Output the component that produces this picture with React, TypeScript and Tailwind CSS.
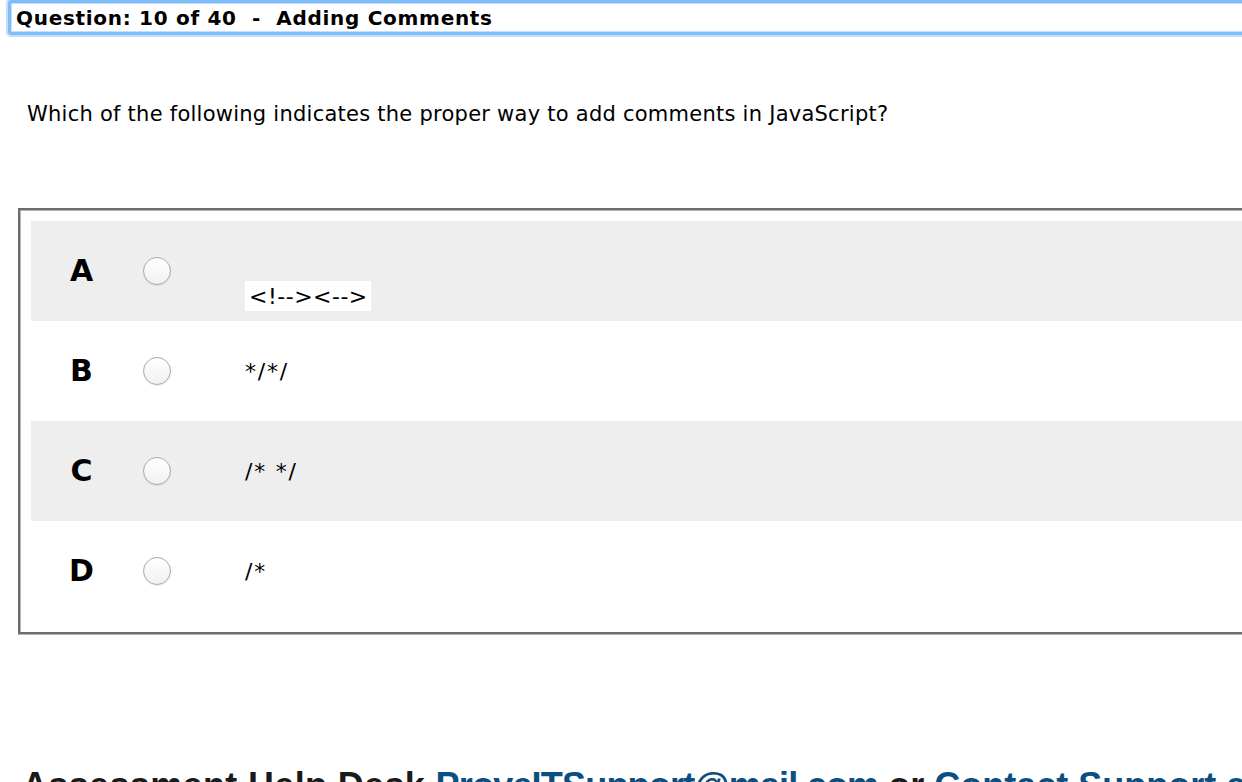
import React from "react";

const options = [
  { letter: "A", text: "<!--><-->", gray: true, boxed: true },
  { letter: "B", text: "*/*/", gray: false, boxed: false },
  { letter: "C", text: "/* */", gray: true, boxed: false },
  { letter: "D", text: "/*", gray: false, boxed: false },
];

function Radio() {
  return (
    <div className="w-[28px] h-[28px] rounded-full border border-[#a9a9a9] bg-gradient-to-b from-white to-[#f1f1f1] shadow-[inset_0_1px_1px_rgba(255,255,255,0.9),0_1px_1px_rgba(0,0,0,0.08)] shrink-0" />
  );
}

export default function App() {
  return (
    <div className="w-[1242px] h-[782px] overflow-hidden bg-white relative font-['DejaVu_Sans',Verdana,sans-serif] text-black">
      <div className="w-[1400px]">
        {/* Header */}
        <div className="ml-[8px] h-[35px] border-[3px] border-[#7fbdfa] rounded-[3px] shadow-[0_0_0_2px_#c4defb,inset_0_0_0_1px_#c4defb] flex items-center pl-[5px]">
          <span className="text-[20px] font-bold whitespace-pre leading-none tracking-[0.7px]">Question: 10 of 40  -  Adding Comments</span>
        </div>

        {/* Question */}
        <p className="mt-[67px] ml-[27px] text-[21px] leading-[24px] tracking-[0.25px]">
          Which of the following indicates the proper way to add comments in JavaScript?
        </p>

        {/* Answers table */}
        <div className="mt-[82px] ml-[18px] border-t-[2px] border-l-[2px] border-b-[2px] border-[#6d6d6d] shadow-[0_1px_0_#b5b5b5]">
          <div className="border-t border-l border-[#b5b5b5] pt-[10px] pl-[10px] pb-[11px]">
            {options.map((o) => (
              <div
                key={o.letter}
                className={`h-[100px] flex items-center ${o.gray ? "bg-[#eeeeee]" : "bg-white"}`}
              >
                <div className="w-[101px] text-center text-[30px] font-bold leading-none">{o.letter}</div>
                <div className="ml-[11px]">
                  <Radio />
                </div>
                {o.boxed ? (
                  <div className="ml-[74px] mt-[50px] h-[30px] bg-white pl-[4px] pr-[3px] flex items-center text-[22px] tracking-[0.5px] whitespace-pre">
                    {o.text}
                  </div>
                ) : (
                  <div className="ml-[74px] text-[22px] tracking-[1.8px] whitespace-pre">{o.text}</div>
                )}
              </div>
            ))}
          </div>
        </div>

        {/* Footer */}
        <div className="mt-[132px] ml-[22px] whitespace-nowrap font-['Liberation_Sans',Arial,sans-serif] text-[36px] font-bold leading-[40px]">
          <span className="text-[#1a1a1a] tracking-[0.35px]">Assessment Help Desk </span>
          <span className="text-[#0b4f82] tracking-[-0.8px]">ProveITSupport@mail.com</span>
          <span className="text-[#1a1a1a]"> or </span>
          <span className="text-[#0b4f82]">Contact Support at ProveIT</span>
        </div>
      </div>
    </div>
  );
}
